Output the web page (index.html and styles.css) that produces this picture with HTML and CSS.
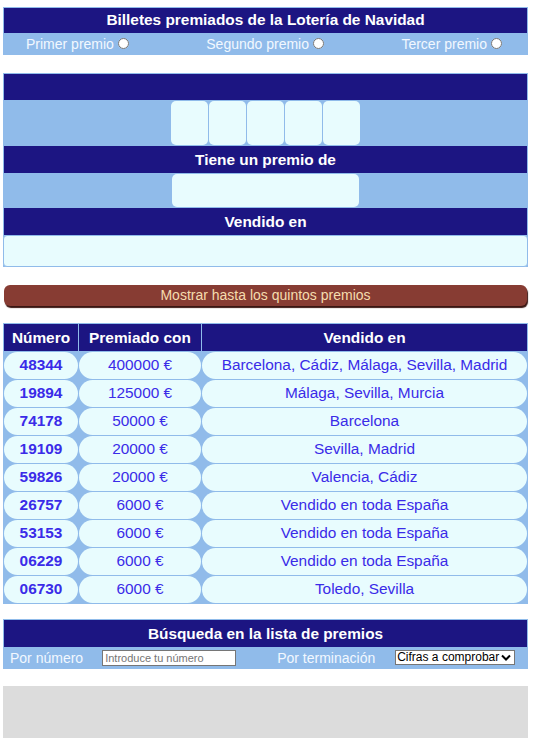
FILE: index.html
```html
<!DOCTYPE html>
<html lang="es">
<head>
<meta charset="utf-8">
<title>Lotería de Navidad</title>
<link rel="stylesheet" href="styles.css">
</head>
<body>
<div class="page">
  <section class="panel prizes-pick">
    <div class="bar">Billetes premiados de la Lotería de Navidad</div>
    <div class="radios">
      <label>Primer premio <input type="radio" name="premio"></label>
      <label>Segundo premio <input type="radio" name="premio"></label>
      <label>Tercer premio <input type="radio" name="premio"></label>
    </div>
  </section>

  <section class="panel result">
    <div class="bar empty"></div>
    <div class="row digits-row">
      <div class="digits">
        <span class="digit"></span><span class="digit"></span><span class="digit"></span><span class="digit"></span><span class="digit"></span>
      </div>
    </div>
    <div class="bar tall">Tiene un premio de</div>
    <div class="row prize-row"><span class="prize-box"></span></div>
    <div class="bar tall">Vendido en</div>
    <div class="sold-box"></div>
  </section>

  <button class="more">Mostrar hasta los quintos premios</button>

  <table class="list">
    <thead>
      <tr><th class="c1">Número</th><th class="c2">Premiado con</th><th class="c3">Vendido en</th></tr>
    </thead>
    <tbody>
      <tr><td class="num">48344</td><td>400000 €</td><td>Barcelona, Cádiz, Málaga, Sevilla, Madrid</td></tr>
      <tr><td class="num">19894</td><td>125000 €</td><td>Málaga, Sevilla, Murcia</td></tr>
      <tr><td class="num">74178</td><td>50000 €</td><td>Barcelona</td></tr>
      <tr><td class="num">19109</td><td>20000 €</td><td>Sevilla, Madrid</td></tr>
      <tr><td class="num">59826</td><td>20000 €</td><td>Valencia, Cádiz</td></tr>
      <tr><td class="num">26757</td><td>6000 €</td><td>Vendido en toda España</td></tr>
      <tr><td class="num">53153</td><td>6000 €</td><td>Vendido en toda España</td></tr>
      <tr><td class="num">06229</td><td>6000 €</td><td>Vendido en toda España</td></tr>
      <tr><td class="num">06730</td><td>6000 €</td><td>Toledo, Sevilla</td></tr>
    </tbody>
  </table>

  <section class="panel search">
    <div class="bar tall">Búsqueda en la lista de premios</div>
    <div class="search-row">
      <span class="lbl">Por número</span>
      <input class="num-input" type="text" placeholder="Introduce tu número">
      <span class="lbl lbl2">Por terminación</span>
      <select class="sel"><option>Cifras a comprobar</option></select>
    </div>
  </section>

  <div class="gray"></div>
</div>
</body>
</html>
```

FILE: styles.css
```css
* { box-sizing: border-box; }
html, body { margin: 0; padding: 0; background: #fff; }
body { font-family: "Liberation Sans", Arial, sans-serif; }

.page {
  width: 525px;
  margin: 7px 0 0 3px;
  display: flex;
  flex-direction: column;
}

.panel {
  border: 1px solid #90bbea;
  background: #90bbea;
}

.bar {
  background: #1c1582;
  color: #fff;
  font-weight: bold;
  font-size: 15.4px;
  text-align: center;
  height: 26px;
  line-height: 26px;
}
.bar.tall { height: 27px; line-height: 27px; }
.prizes-pick .bar { height: 25px; line-height: 24px; }

.radios {
  height: 21px;
  display: flex;
  justify-content: space-between;
  align-items: center;
  padding: 0 25px 0 22px;
  color: #f2f8ff;
  font-size: 14px;
}
.radios label { display: flex; align-items: center; }
.radios input {
  margin: 0 0 0 4px;
  width: 11px;
  height: 11px;
}

.result { margin-top: 18px; border-bottom: none; }
.bar.empty { height: 26px; }
.row { display: flex; justify-content: center; background: #90bbea; }
.digits-row { height: 46px; padding-top: 1px; }
.digits { display: flex; gap: 1px; margin-left: -1px; }
.digit {
  width: 37px;
  height: 44px;
  background: #e8fcfe;
  border-radius: 5px;
}
.prize-row { height: 35px; padding-top: 1px; margin-left: -1px; }
.prize-box {
  width: 187px;
  height: 33px;
  background: #e8fcfe;
  border-radius: 5px;
}
.sold-box {
  height: 32px;
  margin: 0 -1px;
  background: #e8fcfe;
  border: 1px solid #90bbea;
  border-radius: 4px;
}

.more {
  margin: 18px 1px 0 1px;
  height: 21px;
  background: #873c33;
  color: #f5dcae;
  font-family: "Liberation Sans", Arial, sans-serif;
  font-size: 14px;
  border: none;
  border-radius: 6px;
  box-shadow: 1px 2px 1px #3a1612;
  padding: 0;
  line-height: 21px;
}

.list {
  margin-top: 17px;
  width: 525px;
  border-collapse: separate;
  border-spacing: 1px;
  background: #90bbea;
  table-layout: fixed;
}
.list th {
  background: #1c1582;
  color: #fff;
  font-weight: bold;
  font-size: 15.4px;
  height: 27px;
  padding: 0;
}
.list th.c1 { width: 74px; }
.list th.c2 { width: 122px; }
.list td {
  background: #e8fcfe;
  color: #3a2be8;
  font-size: 15.4px;
  text-align: center;
  height: 27px;
  padding: 0 0 1px 0;
  border-radius: 14px;
}
.list td.num { font-weight: bold; }

.search { margin-top: 15px; }
.search-row {
  height: 21px;
  display: flex;
  align-items: center;
  padding-left: 6px;
}
.lbl { color: #f2f8ff; font-size: 14px; }
.num-input {
  margin-left: 19px;
  width: 134px;
  height: 16px;
  font-family: "Liberation Sans", Arial, sans-serif;
  font-size: 11px;
  padding: 0 2px;
  border: 1px solid #767676;
  border-radius: 0;
  background: #fff;
}
.num-input::placeholder { color: #757575; }
.lbl2 { margin-left: 41px; }
.sel {
  -webkit-appearance: none;
  appearance: none;
  margin-left: 20px;
  width: 120px;
  height: 15px;
  font-family: "Liberation Sans", Arial, sans-serif;
  font-size: 12px;
  line-height: 13px;
  padding: 0 14px 0 1px;
  border: 1px solid #767676;
  border-radius: 0;
  color: #000;
  background: #fff url("data:image/svg+xml;utf8,<svg xmlns='http://www.w3.org/2000/svg' width='10' height='7' viewBox='0 0 10 7'><path d='M1 1.5 L5 5.5 L9 1.5' fill='none' stroke='black' stroke-width='2'/></svg>") no-repeat right 3px center;
}

.gray {
  margin-top: 17px;
  height: 52px;
  background: #dcdcdc;
}
```
